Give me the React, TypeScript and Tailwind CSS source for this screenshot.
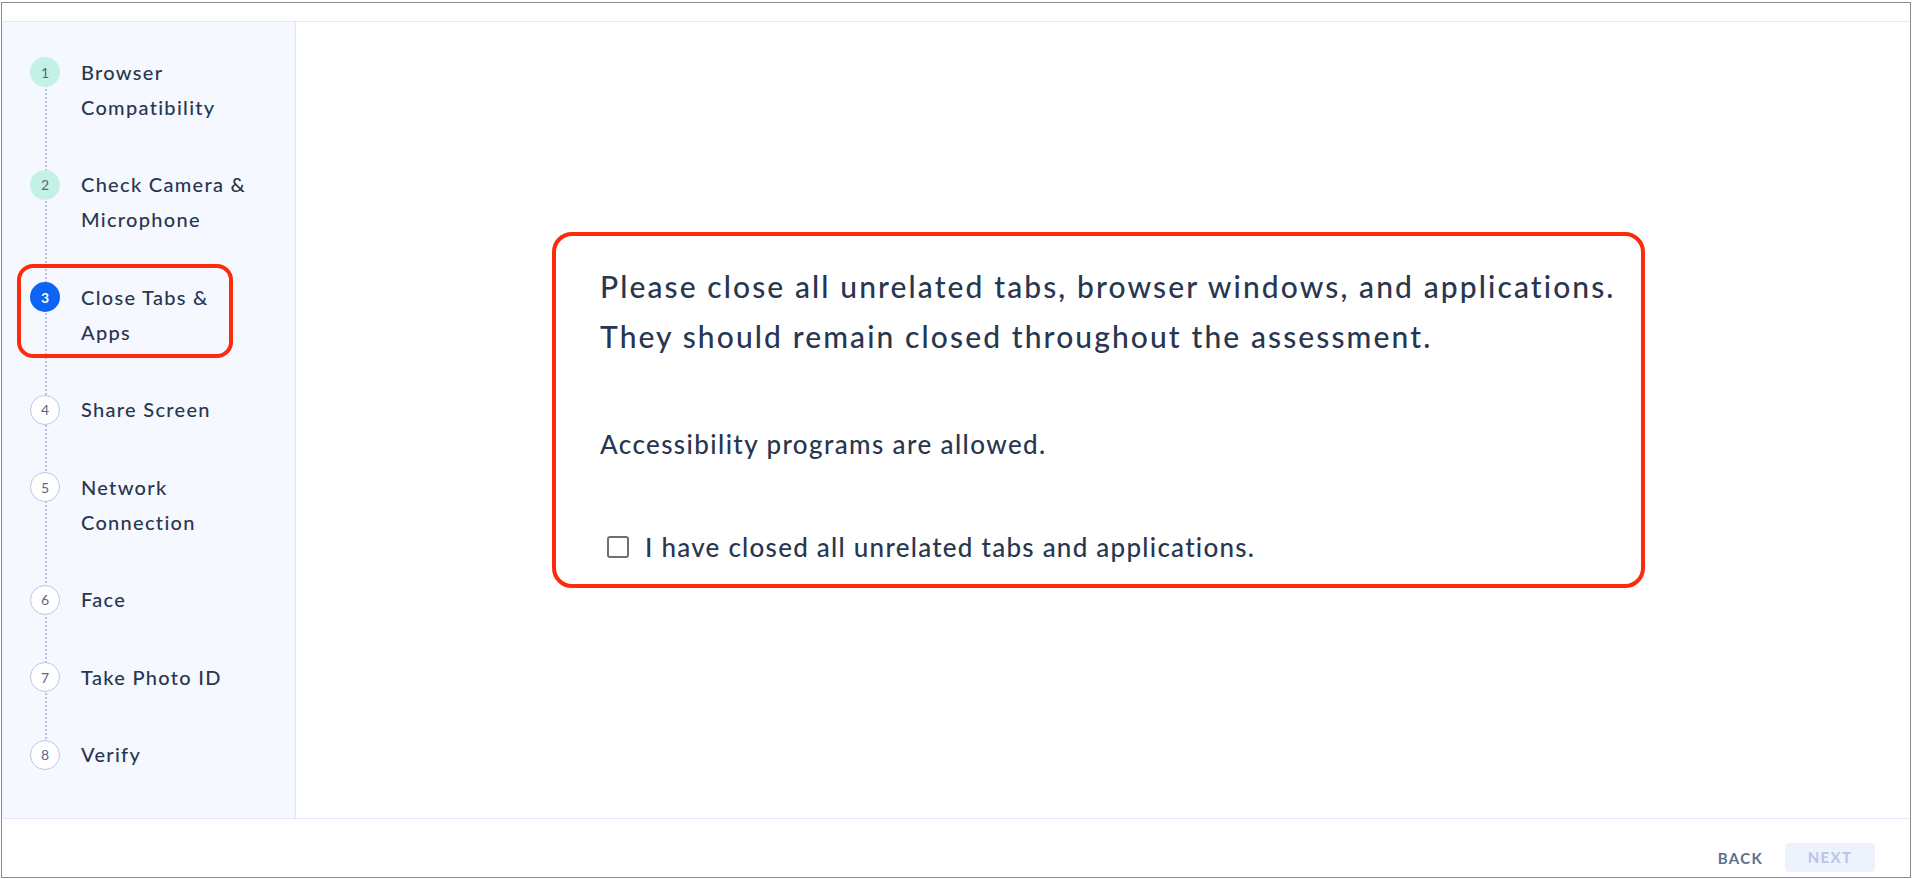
import React from "react";

const steps = [
  { n: 1, lines: ["Browser", "Compatibility"], state: "done" },
  { n: 2, lines: ["Check Camera &", "Microphone"], state: "done" },
  { n: 3, lines: ["Close Tabs &", "Apps"], state: "active" },
  { n: 4, lines: ["Share Screen"], state: "todo" },
  { n: 5, lines: ["Network", "Connection"], state: "todo" },
  { n: 6, lines: ["Face"], state: "todo" },
  { n: 7, lines: ["Take Photo ID"], state: "todo" },
  { n: 8, lines: ["Verify"], state: "todo" },
];

function Circle({ n, state }: { n: number; state: string }) {
  if (state === "done")
    return (
      <div className="relative z-10 mt-[2.5px] flex h-[30px] w-[30px] shrink-0 items-center justify-center rounded-full bg-[#c3f2e5] text-[14px] text-[#54657e]">
        {n}
      </div>
    );
  if (state === "active")
    return (
      <div className="relative z-10 mt-[2.5px] flex h-[30px] w-[30px] shrink-0 items-center justify-center rounded-full bg-[#0d63f3] text-[14px] font-bold text-white">
        {n}
      </div>
    );
  return (
    <div className="relative z-10 mt-[2.5px] flex h-[30px] w-[30px] shrink-0 items-center justify-center rounded-full border border-[#b9c7e6] bg-white text-[14px] text-[#5a6984]">
      {n}
    </div>
  );
}

export default function App() {
  return (
    <div
      className="h-[879px] w-[1913px] bg-white pb-[1px] pl-[1px] pr-[2px] pt-[2px] text-[#29364f]"
      style={{ fontFamily: "Lato, 'Noto Sans', sans-serif" }}
    >
      <div className="flex h-full w-full flex-col border border-[#8c8c8c]">
        <div className="h-[19px] shrink-0 border-b border-[#e2e8f5]" />
        <div className="flex min-h-0 flex-1 border-b border-[#e2e8f5]">
          <aside className="w-[294px] shrink-0 border-r border-[#dfe6f5] bg-[#f5f8fe] pl-[28px] pt-[32.5px]">
            <div className="relative flex flex-col gap-[42.5px]">
              <div className="absolute left-[14.5px] top-[17px] h-[683px] border-l-2 border-dotted border-[#b4c2e2]" />
              {steps.map((s) => (
                <div key={s.n} className="relative flex items-start gap-[21px]">
                  {s.state === "active" && (
                    <div className="absolute -left-[13px] -top-[15.5px] h-[94px] w-[216px] rounded-[16px] border-4 border-[#fe2a0c]" />
                  )}
                  <Circle n={s.n} state={s.state} />
                  <div className="text-[20px] font-medium leading-[35px] tracking-[1.3px]">
                    {s.lines.map((l) => (
                      <div key={l}>{l}</div>
                    ))}
                  </div>
                </div>
              ))}
            </div>
          </aside>
          <main className="flex-1 pl-[256px] pt-[210px]">
            <div className="h-[356px] w-[1093px] rounded-[20px] border-4 border-[#fe2a0c] pl-[44px] pt-[25px]">
              <div className="text-[30px] font-medium leading-[50px] tracking-[2.1px]">
                <div>Please close all unrelated tabs, browser windows, and applications.</div>
                <div>They should remain closed throughout the assessment.</div>
              </div>
              <div className="mt-[66px] text-[26px] font-medium leading-[34px] tracking-[1.4px]">
                Accessibility programs are allowed.
              </div>
              <label className="ml-[7px] mt-[69px] flex items-center gap-[16px] text-[26px] font-medium leading-[34px] tracking-[1.25px]">
                <span className="h-[22px] w-[22px] shrink-0 rounded-[3px] border-2 border-[#6f6f6f] bg-white" />
                <span>I have closed all unrelated tabs and applications.</span>
              </label>
            </div>
          </main>
        </div>
        <div className="flex h-[58px] shrink-0 items-start justify-end pr-[35px] pt-[24px]">
          <button className="mr-[22px] mt-[4px] text-[15px] font-bold tracking-[1.3px] text-[#5b6f8e]">BACK</button>
          <button className="h-[29px] w-[90px] rounded-[4px] bg-[#eef2fc] text-[15px] font-bold tracking-[1.3px] text-[#b8c5e8]">
            NEXT
          </button>
        </div>
      </div>
    </div>
  );
}
